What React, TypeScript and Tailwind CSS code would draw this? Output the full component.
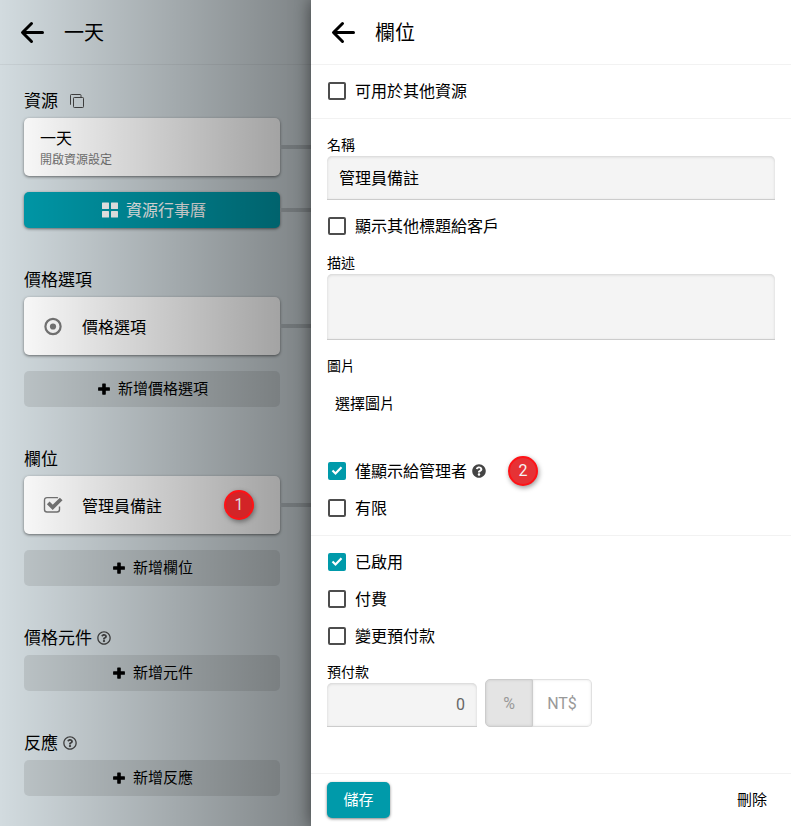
import { useState, type ReactNode } from "react";
import { FaQuestionCircle, FaRegQuestionCircle } from "react-icons/fa";

function BackArrow() {
  return (
    <svg width="24" height="24" viewBox="0 0 24 24" fill="none" stroke="currentColor" strokeWidth="3" strokeLinecap="round" strokeLinejoin="round">
      <path d="M11.5 3.5 2.5 12.5l9 9M3 12.5h19.5" />
    </svg>
  );
}

function CopyIcon() {
  return (
    <svg width="16" height="16" viewBox="0 0 16 16" fill="none" stroke="currentColor" strokeWidth="1">
      <rect x="3.5" y="4.5" width="10" height="10" rx="0.8" />
      <path d="M1 11.500H0.500V2.300a.8.800 0 0 1 .8-.800h8.900a.8.800 0 0 1 .8.800V4" />
    </svg>
  );
}

function PlusIcon() {
  return (
    <svg width="12" height="12" viewBox="0 0 12 12" fill="currentColor">
      <path d="M4.800 0.500h2.400a.6.600 0 0 1 .6.600v3.100h3.500a.6.600 0 0 1 .6.600v2.400a.6.600 0 0 1-.6.600H7.800v3.300a.6.600 0 0 1-.6.600H4.800a.6.600 0 0 1-.6-.600V7.800H.700a.6.600 0 0 1-.6-.600V4.800a.6.600 0 0 1 .6-.600h3.500V1.100a.6.600 0 0 1 .6-.600z" />
    </svg>
  );
}

function GridIcon() {
  return (
    <svg width="16" height="16" viewBox="0 0 16 16" fill="currentColor">
      <rect x="0" y="0.500" width="7" height="6.500" rx="0.500" />
      <rect x="9" y="0.500" width="7" height="6.500" rx="0.500" />
      <rect x="0" y="9" width="7" height="6.500" rx="0.500" />
      <rect x="9" y="9" width="7" height="6.500" rx="0.500" />
    </svg>
  );
}

function DotCircleIcon() {
  return (
    <svg width="20" height="20" viewBox="0 0 20 20">
      <circle cx="10" cy="10.500" r="7.600" fill="none" stroke="currentColor" strokeWidth="2.200" />
      <circle cx="10" cy="10.500" r="3.100" fill="currentColor" />
    </svg>
  );
}

function CheckSquareIcon() {
  return (
    <svg width="20" height="20" viewBox="0 0 20 20" fill="none" stroke="currentColor">
      <path d="M15 2.800A2.500 2.500 0 0 0 14 2.600H4a2.500 2.500 0 0 0-2.500 2.500v9.400A2.500 2.500 0 0 0 4 17h10a2.500 2.500 0 0 0 2.500-2.500V11.500" strokeWidth="1.400" />
      <path d="m5.200 7.800 4.500 4.500 8.500-8.300" strokeWidth="3.800" />
    </svg>
  );
}

function StepBadge({ value, className }: { value: number; className: string }) {
  return (
    <span className={`grid size-[30px] place-items-center rounded-full border-2 border-[#ff1216] text-base leading-none shadow-[1px_2px_5px_rgba(0,0,0,0.4)] ${className}`}>
      {value}
    </span>
  );
}

function Header({ title }: { title: string }) {
  return (
    <header className="flex h-[65px] items-center gap-5 border-b border-black/5 px-5">
      <button type="button" aria-label="返回">
        <BackArrow />
      </button>
      <h1 className="pt-0.5 text-xl">{title}</h1>
    </header>
  );
}

function Section({ title, icon, children }: { title: string; icon?: ReactNode; children: ReactNode }) {
  return (
    <section>
      <h2 className="flex h-[35px] items-center text-[17px]">
        <span className="pt-0.5">{title}</span>
        {icon}
      </h2>
      <div className="flex flex-col gap-4">{children}</div>
    </section>
  );
}

function Row({ linked = false, children }: { linked?: boolean; children: ReactNode }) {
  return (
    <div className="grid grid-cols-[1fr_31px] items-center">
      {children}
      {linked && <div className="h-1 bg-[#b2babe]" />}
    </div>
  );
}

const cardClass = "flex h-[58px] w-full items-center rounded-[5px] bg-white px-4 text-left shadow-[0_1px_3px_rgba(0,0,0,0.5)]";

function AddButton({ label }: { label: string }) {
  return (
    <Row>
      <button type="button" className="flex h-9 items-center justify-center gap-2 rounded-[5px] bg-black/9 pl-0.5 text-[15px]">
        <PlusIcon />
        <span className="pt-px">{label}</span>
      </button>
    </Row>
  );
}

function HelpIcon() {
  return <FaRegQuestionCircle size={14} className="ml-[5px] text-[#444]" />;
}

function Sidebar() {
  return (
    <aside className="relative w-[311px] shrink-0 bg-[#d2dbdf]">
      <Header title="一天" />
      <div className="flex flex-col gap-[34px] pt-[18px] pb-[30px] pl-6">
        <Section
          title="資源"
          icon={
            <button type="button" aria-label="複製" className="ml-3 text-[#444]">
              <CopyIcon />
            </button>
          }
        >
          <Row linked>
            <button type="button" className={cardClass}>
              <span className="pt-0.5">
                <span className="block text-base leading-6">一天</span>
                <span className="block text-xs leading-[18px] text-[#777]">開啟資源設定</span>
              </span>
            </button>
          </Row>
          <Row linked>
            <button type="button" className="flex h-9 items-center justify-center gap-2 rounded-[5px] bg-[#009aaa] pl-1 text-base text-white shadow-[0_1px_3px_rgba(0,0,0,0.5)]">
              <GridIcon />
              <span className="pt-0.5">資源行事曆</span>
            </button>
          </Row>
        </Section>
        <Section title="價格選項">
          <Row linked>
            <button type="button" className={cardClass}>
              <span className="ml-[3px] mr-[19px] text-[#777]">
                <DotCircleIcon />
              </span>
              <span className="pt-1">價格選項</span>
            </button>
          </Row>
          <AddButton label="新增價格選項" />
        </Section>
        <Section title="欄位">
          <Row linked>
            <button type="button" className={cardClass}>
              <span className="ml-[3px] mr-[19px] text-[#777]">
                <CheckSquareIcon />
              </span>
              <span className="pt-1">管理員備註</span>
              <StepBadge value={1} className="relative z-10 ml-auto mr-2.5 bg-[#d32427] text-[#ddd]" />
            </button>
          </Row>
          <AddButton label="新增欄位" />
        </Section>
        <Section title="價格元件" icon={<HelpIcon />}>
          <AddButton label="新增元件" />
        </Section>
        <Section title="反應" icon={<HelpIcon />}>
          <AddButton label="新增反應" />
        </Section>
      </div>
      <div className="pointer-events-none absolute inset-0 bg-linear-to-r from-black/0 to-black/40" />
    </aside>
  );
}

function CheckRow({ label, initial = false, children }: { label: string; initial?: boolean; children?: ReactNode }) {
  const [checked, setChecked] = useState(initial);
  return (
    <div className="mb-px flex h-9 items-center">
      <label className="flex items-center gap-[9px] pl-px">
        <span className="grid">
          <input
            type="checkbox"
            checked={checked}
            onChange={(e) => setChecked(e.target.checked)}
            className="col-start-1 row-start-1 size-[18px] appearance-none rounded-[2px] border-2 border-[#4d4d4d] checked:border-[#009aaa] checked:bg-[#009aaa]"
          />
          {checked && (
            <svg className="pointer-events-none col-start-1 row-start-1" width="18" height="18" viewBox="0 0 18 18" fill="none" stroke="white" strokeWidth="2.200">
              <path d="m4.500 8.500 3 3 6-6.300" />
            </svg>
          )}
        </span>
        <span className="pt-0.5">{label}</span>
      </label>
      {children}
    </div>
  );
}

const labelClass = "block h-[21px] text-sm leading-[21px]";
const fieldClass = "block w-full rounded-t-[5px] border-b border-[#ccc] bg-[#f4f4f4] px-3 text-base shadow-[inset_0_1px_3px_rgba(0,0,0,0.14)] outline-none";

function FieldPanel() {
  const [unit, setUnit] = useState("%");
  return (
    <main className="relative z-10 flex min-w-0 flex-1 flex-col bg-white shadow-[0_0_16px_rgba(0,0,0,0.5)]">
      <Header title="欄位" />
      <div className="border-b border-black/5 px-4 py-2">
        <CheckRow label="可用於其他資源" />
      </div>
      <div className="flex flex-col gap-2 border-b border-black/5 px-4 pt-4 pb-2">
        <div>
          <label htmlFor="name" className={labelClass}>名稱</label>
          <input id="name" type="text" defaultValue="管理員備註" className={`${fieldClass} h-11 pb-0.5`} />
        </div>
        <CheckRow label="顯示其他標題給客戶" />
        <div>
          <label htmlFor="description" className={labelClass}>描述</label>
          <textarea id="description" className={`${fieldClass} h-[66px] resize-none py-2`} />
        </div>
        <div className="pt-2">
          <p className={labelClass}>圖片</p>
          <button type="button" className="mt-2 h-9 px-2 pt-0.5 text-[15px]">選擇圖片</button>
        </div>
        <div className="pt-6">
          <CheckRow label="僅顯示給管理者" initial>
            <FaQuestionCircle size={14} className="ml-[5px] text-[#444]" />
            <StepBadge value={2} className="ml-[22px] bg-[#e63235] text-[#f4f4f4]" />
          </CheckRow>
          <CheckRow label="有限" />
        </div>
      </div>
      <div className="px-4 pt-2 pb-6">
        <CheckRow label="已啟用" initial />
        <CheckRow label="付費" />
        <CheckRow label="變更預付款" />
        <div className="mt-2 flex items-end gap-2">
          <div className="w-[150px]">
            <label htmlFor="deposit" className={labelClass}>預付款</label>
            <input id="deposit" type="text" defaultValue="0" className={`${fieldClass} h-11 text-right text-[#666]`} />
          </div>
          <div className="flex h-12 rounded-[5px] text-base text-[#999]">
            <button
              type="button"
              aria-pressed={unit === "%"}
              onClick={() => setUnit("%")}
              className="w-12 rounded-l-[5px] border border-[#e0e0e0] pt-0.5 aria-pressed:border-[#ccc] aria-pressed:bg-[#e4e4e4] aria-pressed:shadow-[inset_0_0_3px_rgba(0,0,0,0.12)]"
            >
              %
            </button>
            <button
              type="button"
              aria-pressed={unit === "NT$"}
              onClick={() => setUnit("NT$")}
              className="w-[59px] rounded-r-[5px] border border-l-0 border-[#e0e0e0] pt-0.5 shadow-[inset_0_0_3px_rgba(0,0,0,0.1)] aria-pressed:bg-[#e4e4e4]"
            >
              NT$
            </button>
          </div>
        </div>
      </div>
      <footer className="mt-auto flex items-center justify-between border-t border-black/5 px-4 py-2 text-[15px]">
        <button type="button" className="h-9 w-[63px] rounded-[5px] bg-[#009aaa] text-white shadow-[0_1px_3px_rgba(0,0,0,0.5)]">儲存</button>
        <button type="button" className="h-9 px-2">刪除</button>
      </footer>
    </main>
  );
}

export default function App() {
  return (
    <div className="flex min-h-screen overflow-hidden font-['Roboto','Noto_Sans_CJK_TC',sans-serif] text-base text-black">
      <Sidebar />
      <FieldPanel />
    </div>
  );
}
